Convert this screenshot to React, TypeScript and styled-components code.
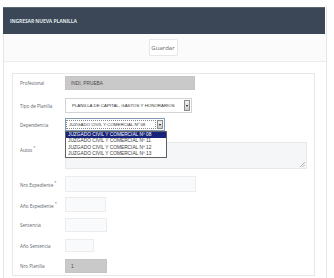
import React from 'react';
import styled, { createGlobalStyle } from 'styled-components';

const GlobalStyle = createGlobalStyle`
  html, body {
    margin: 0;
    padding: 0;
    background: #ffffff;
  }
  body {
    font-family: "Open Sans", "Liberation Sans", Arial, sans-serif;
  }
`;

const dependencias = [
  'JUZGADO CIVIL Y COMERCIAL Nº 08',
  'JUZGADO CIVIL Y COMERCIAL Nº 11',
  'JUZGADO CIVIL Y COMERCIAL Nº 12',
  'JUZGADO CIVIL Y COMERCIAL Nº 13',
];

const Page = styled.div`
  width: 334px;
  height: 278px;
  box-sizing: border-box;
  padding: 7px 7px 0 3px;
  overflow: hidden;
`;

const Window = styled.div`
  height: 100%;
  border-left: 1px solid #e6e6e6;
  border-right: 1px solid #e6e6e6;
  display: flex;
  flex-direction: column;
`;

const Header = styled.div`
  height: 27px;
  margin-left: -1px;
  margin-right: 1px;
  background: #3b4756;
  border-top: 1px solid #5a6470;
  box-sizing: border-box;
  display: flex;
  align-items: center;
  padding-left: 7px;
`;

const Title = styled.span`
  color: #dfe4ea;
  font-size: 5px;
  font-weight: 700;
  letter-spacing: -0.1px;
  text-transform: uppercase;
`;

const Toolbar = styled.div`
  height: 27px;
  background: #fbfbfc;
  border-bottom: 1px solid #ececec;
  display: flex;
  align-items: center;
  justify-content: center;
  padding-right: 4px;
`;

const SaveButton = styled.button`
  width: 29px;
  height: 17px;
  padding: 0;
  background: #ffffff;
  border: 1px solid #e6e6e6;
  border-radius: 1px;
  color: #6a6a6a;
  font-family: "Open Sans", "Liberation Sans", sans-serif;
  font-size: 6px;
`;

const Body = styled.div`
  flex: 1;
  padding: 11px 11px 0 8px;
`;

const Panel = styled.div`
  border: 1px solid #e8e8e8;
  padding: 2px 7px 2px 7px;
  background: #ffffff;
`;

const Row = styled.div<{ $mt: number; $top?: boolean }>`
  display: flex;
  align-items: ${(p) => (p.$top ? 'flex-start' : 'center')};
  margin-top: ${(p) => p.$mt}px;
`;

const Label = styled.div<{ $pt?: number }>`
  width: 45px;
  flex-shrink: 0;
  font-size: 4.6px;
  color: #5d646b;
  padding-top: ${(p) => p.$pt || 0}px;
  white-space: nowrap;
`;

const Req = styled.sup`
  font-size: 4px;
  margin-left: 1px;
  color: #666;
`;

const Field = styled.div<{ $w: number; $h: number; $muted?: boolean }>`
  width: ${(p) => p.$w}px;
  height: ${(p) => p.$h}px;
  box-sizing: border-box;
  background: ${(p) => (p.$muted ? '#c9c9c9' : '#f9fafb')};
  border: 1px solid ${(p) => (p.$muted ? '#c4c4c4' : '#ececec')};
  display: flex;
  align-items: center;
  padding-left: 5px;
  font-size: 4.8px;
  color: #4a4a4a;
  font-family: "Liberation Sans", Arial, sans-serif;
`;

const TextArea = styled.div`
  position: relative;
  width: 248px;
  height: 27px;
  box-sizing: border-box;
  background: #f4f6f8;
  border: 1px solid #e6e9ec;
`;

const Grip = styled.svg`
  position: absolute;
  right: 1px;
  bottom: 1px;
`;

const SelectWrap = styled.div`
  position: relative;
`;

const Select = styled.div<{ $w: number; $h: number; $focus?: boolean }>`
  width: ${(p) => p.$w}px;
  height: ${(p) => p.$h}px;
  box-sizing: border-box;
  background: #ffffff;
  border: 1px solid ${(p) => (p.$focus ? '#7f9db9' : '#d4d4d4')};
  display: flex;
  align-items: stretch;
  font-family: "Liberation Sans", Arial, sans-serif;
  font-size: 4.4px;
  color: #333;
`;

const SelectText = styled.div<{ $focus?: boolean }>`
  flex: 1;
  display: flex;
  align-items: center;
  padding-left: ${(p) => (p.$focus ? 2 : 5)}px;
  margin: 2px 1px 2px 1px;
  outline: ${(p) => (p.$focus ? '1px dotted #8a8a8a' : 'none')};
  white-space: nowrap;
`;

const Arrow = styled.div`
  width: 6px;
  flex-shrink: 0;
  margin: 1px;
  background: linear-gradient(#f2f2f2, #cfcfcf);
  border: 1px solid #8c8c8c;
  box-sizing: border-box;
  display: flex;
  align-items: center;
  justify-content: center;
  &::after {
    content: '';
    border-left: 1.5px solid transparent;
    border-right: 1.5px solid transparent;
    border-top: 2px solid #111;
  }
`;

const DropList = styled.div`
  position: absolute;
  top: 13px;
  left: 0;
  width: 102px;
  box-sizing: border-box;
  background: #ffffff;
  border: 1px solid #5f5f5f;
  z-index: 2;
  font-family: "Liberation Sans", Arial, sans-serif;
  font-size: 4.8px;
`;

const DropItem = styled.div<{ $active?: boolean }>`
  height: 6.3px;
  line-height: 6.3px;
  padding-left: 2px;
  background: ${(p) => (p.$active ? '#18237a' : '#ffffff')};
  color: ${(p) => (p.$active ? '#ffffff' : '#3a3a3a')};
  white-space: nowrap;
`;

export default function App() {
  return (
    <Page>
      <GlobalStyle />
      <Window>
        <Header>
          <Title>Ingresar nueva planilla</Title>
        </Header>
        <Toolbar>
          <SaveButton type="button">Guardar</SaveButton>
        </Toolbar>
        <Body>
          <Panel>
            <Row $mt={0}>
              <Label>Profesional</Label>
              <Field $w={130} $h={14} $muted>
                INDI, PRUEBA
              </Field>
            </Row>
            <Row $mt={8}>
              <Label>Tipo de Planilla</Label>
              <Select $w={127} $h={15}>
                <SelectText>PLANILLA DE CAPITAL, GASTOS Y HONORARIOS</SelectText>
                <Arrow />
              </Select>
            </Row>
            <Row $mt={5}>
              <Label>Dependencia</Label>
              <SelectWrap>
                <Select $w={100} $h={13} $focus>
                  <SelectText $focus>{dependencias[0]}</SelectText>
                  <Arrow />
                </Select>
                <DropList>
                  {dependencias.map((d, i) => (
                    <DropItem key={d} $active={i === 0}>
                      {d}
                    </DropItem>
                  ))}
                </DropList>
              </SelectWrap>
            </Row>
            <Row $mt={11} $top>
              <Label $pt={3}>
                Autos<Req>*</Req>
              </Label>
              <TextArea>
                <Grip width="5" height="5" viewBox="0 0 5 5">
                  <path d="M5 0 L0 5 M5 2.5 L2.5 5" stroke="#9a9a9a" strokeWidth="0.7" />
                </Grip>
              </TextArea>
            </Row>
            <Row $mt={7}>
              <Label>
                Nro Expediente<Req>*</Req>
              </Label>
              <Field $w={131} $h={16} />
            </Row>
            <Row $mt={5}>
              <Label>
                Año Expediente<Req>*</Req>
              </Label>
              <Field $w={41} $h={15} />
            </Row>
            <Row $mt={6}>
              <Label>Sentencia</Label>
              <Field $w={42} $h={14} />
            </Row>
            <Row $mt={7}>
              <Label>Año Sentencia</Label>
              <Field $w={29} $h={13} />
            </Row>
            <Row $mt={7}>
              <Label>Nro Planilla</Label>
              <Field $w={42} $h={14} $muted>
                1
              </Field>
            </Row>
          </Panel>
        </Body>
      </Window>
    </Page>
  );
}
